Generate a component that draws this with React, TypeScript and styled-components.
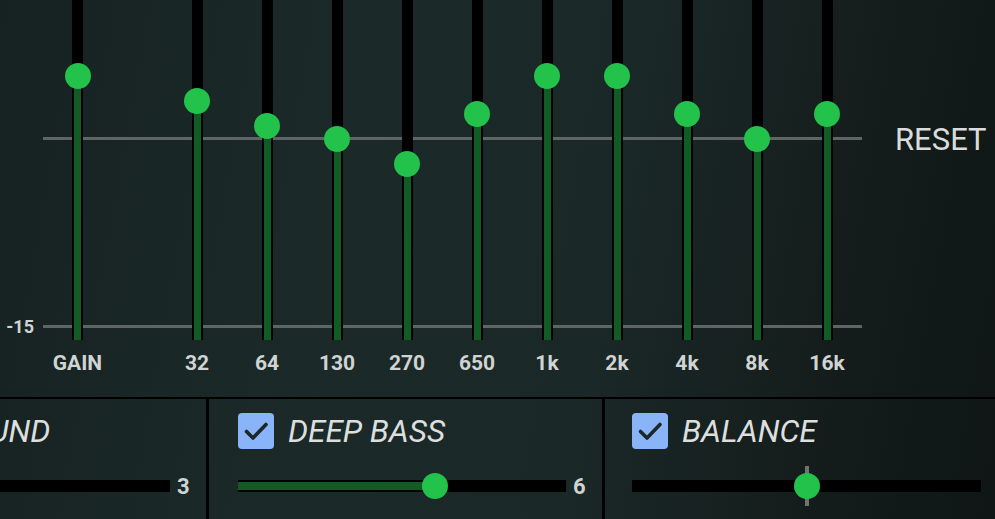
import React from 'react';
import styled, { createGlobalStyle } from 'styled-components';

const GlobalStyle = createGlobalStyle`
  html, body {
    margin: 0;
    padding: 0;
    width: 100%;
    height: 100%;
    overflow: hidden;
    background: #111817;
  }
  body {
    font-family: Roboto, 'Noto Sans', sans-serif;
  }
`;

const DB_PX = 188 / 15;
const CENTER_Y = 138;
const TRACK_H = 340;

const bands = [
  { label: 'GAIN', value: 5 },
  { label: '32', value: 3 },
  { label: '64', value: 1 },
  { label: '130', value: 0 },
  { label: '270', value: -2 },
  { label: '650', value: 2 },
  { label: '1k', value: 5 },
  { label: '2k', value: 5 },
  { label: '4k', value: 2 },
  { label: '8k', value: 0 },
  { label: '16k', value: 2 },
];

const Check = () => (
  <svg width='36' height='36' viewBox='0 0 36 36'>
    <path
      d='M8.5 18.5 L15 25 L28 11.5'
      fill='none'
      stroke='#1c2828'
      strokeWidth='3.6'
      strokeLinecap='round'
      strokeLinejoin='round'
    />
  </svg>
);

const VSlider = ({ label, value }: { label: string; value: number }) => {
  const knobY = CENTER_Y - value * DB_PX;
  return (
    <SC.Band>
      <SC.VTrack>
        <SC.VFill style={{ height: TRACK_H - knobY }} />
        <SC.VKnob style={{ top: knobY }} />
      </SC.VTrack>
      <SC.BandLabel>{label}</SC.BandLabel>
    </SC.Band>
  );
};

type PanelProps = {
  title: string;
  value: number;
  showValue?: boolean;
  centered?: boolean;
  width: number;
  inset?: number;
  divider?: boolean;
};

const EffectPanel = ({
  title,
  value,
  showValue = true,
  centered,
  width,
  inset = 29,
  divider,
}: PanelProps) => {
  const pct = (value / 10) * 100;
  return (
    <SC.Panel $width={width} $inset={inset} $divider={divider}>
      <SC.PanelHeader>
        <SC.CheckBox>
          <Check />
        </SC.CheckBox>
        <SC.PanelTitle>{title}</SC.PanelTitle>
      </SC.PanelHeader>
      <SC.SliderRow>
        <SC.HTrack>
          {centered ? <SC.CenterTick /> : <SC.HFill style={{ width: `${pct}%` }} />}
          <SC.HKnob style={{ left: `${pct}%` }} />
        </SC.HTrack>
        {showValue && <SC.Value>{value}</SC.Value>}
      </SC.SliderRow>
    </SC.Panel>
  );
};

export default function App() {
  return (
    <>
      <GlobalStyle />
      <SC.Screen>
        <SC.EqSection>
          <SC.Scale>-15</SC.Scale>
          <SC.Grid>
            <VSlider label={bands[0].label} value={bands[0].value} />
            <SC.BandGroup>
              {bands.slice(1).map((b) => (
                <VSlider key={b.label} label={b.label} value={b.value} />
              ))}
            </SC.BandGroup>
          </SC.Grid>
          <SC.Reset>RESET</SC.Reset>
        </SC.EqSection>
        <SC.Effects>
          <EffectPanel title='SURROUND' value={3} width={393} />
          <EffectPanel title='DEEP BASS' value={6} width={396} divider />
          <EffectPanel
            title='BALANCE'
            value={5}
            width={393}
            inset={27}
            showValue={false}
            centered
            divider
          />
        </SC.Effects>
      </SC.Screen>
    </>
  );
}

const SC = {
  Screen: styled.div`
    width: 995px;
    height: 519px;
    overflow: hidden;
    display: flex;
    flex-direction: column;
    background: linear-gradient(100deg, #162221 0%, #1b2a29 35%, #1a2827 60%, #141d1c 82%, #0f1615 100%);
  `,
  EqSection: styled.div`
    height: 397px;
    display: flex;
    border-bottom: 2px solid #000;
    flex-shrink: 0;
  `,
  Scale: styled.div`
    width: 43px;
    box-sizing: border-box;
    padding: 317px 9px 0 0;
    text-align: right;
    font-size: 18px;
    line-height: 20px;
    font-weight: 700;
    color: #d0d4d3;
  `,
  Grid: styled.div`
    width: 819px;
    display: flex;
    gap: 50px;
    background:
      linear-gradient(#5f6564, #5f6564) 0 137px / 100% 3px no-repeat,
      linear-gradient(#5f6564, #5f6564) 0 325px / 100% 3px no-repeat;
  `,
  BandGroup: styled.div`
    display: flex;
  `,
  Band: styled.div`
    width: 70px;
    display: flex;
    flex-direction: column;
    align-items: center;
  `,
  VTrack: styled.div`
    position: relative;
    width: 11px;
    height: ${TRACK_H}px;
    background: #000;
  `,
  VFill: styled.div`
    position: absolute;
    left: 2px;
    right: 2px;
    bottom: 0;
    background: #135b24;
  `,
  VKnob: styled.div`
    position: absolute;
    left: 50%;
    width: 26px;
    height: 26px;
    border-radius: 50%;
    background: #22c24b;
    transform: translate(-50%, -50%);
    margin-top: 1px;
  `,
  BandLabel: styled.div`
    margin-top: 11px;
    font-size: 21px;
    line-height: 24px;
    font-weight: 700;
    color: #d0d4d3;
  `,
  Reset: styled.div`
    margin-left: 33px;
    padding-top: 122px;
    font-size: 31px;
    line-height: 36px;
    color: #dadcdc;
  `,
  Effects: styled.div`
    flex: 1;
    display: flex;
    justify-content: flex-end;
    overflow: hidden;
  `,
  Panel: styled.div<{ $width: number; $inset: number; $divider?: boolean }>`
    flex-shrink: 0;
    box-sizing: border-box;
    width: ${({ $width }) => $width}px;
    padding: 14px 14px 0 ${({ $inset }) => $inset}px;
    border-left: ${({ $divider }) => ($divider ? '3px solid #000' : 'none')};
    display: flex;
    flex-direction: column;
  `,
  PanelHeader: styled.div`
    height: 36px;
    display: flex;
    align-items: center;
    gap: 14px;
  `,
  CheckBox: styled.div`
    width: 36px;
    height: 36px;
    border-radius: 4px;
    background: #8ab4f8;
    flex-shrink: 0;
    display: flex;
  `,
  PanelTitle: styled.div`
    font-size: 31.5px;
    font-style: italic;
    color: #dcdfde;
    white-space: nowrap;
  `,
  SliderRow: styled.div`
    margin-top: 17px;
    height: 40px;
    display: flex;
    align-items: center;
    gap: 7px;
  `,
  HTrack: styled.div`
    position: relative;
    flex: 1;
    height: 12px;
    background: #000;
  `,
  HFill: styled.div`
    position: absolute;
    top: 2px;
    bottom: 2px;
    left: 0;
    background: #135b24;
  `,
  CenterTick: styled.div`
    position: absolute;
    left: 50%;
    top: -14px;
    width: 4px;
    height: 40px;
    background: #6f7473;
    transform: translateX(-50%);
  `,
  HKnob: styled.div`
    position: absolute;
    top: 50%;
    width: 26px;
    height: 26px;
    border-radius: 50%;
    background: #22c24b;
    transform: translate(-50%, -50%);
  `,
  Value: styled.div`
    width: 15px;
    font-size: 22px;
    font-weight: 700;
    color: #cfd3d2;
  `,
};
